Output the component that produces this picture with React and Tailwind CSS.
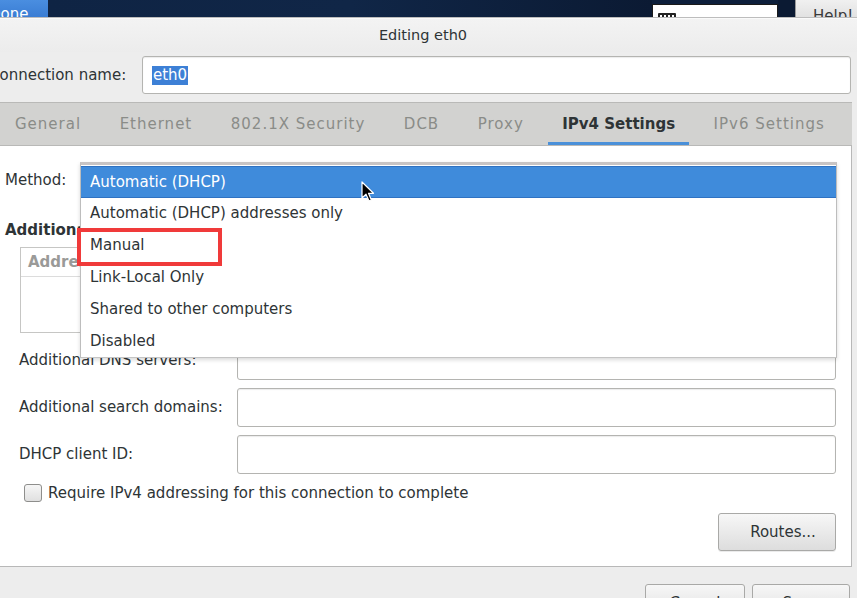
import React from "react";

const FONT = { fontFamily: '"DejaVu Sans", "Noto Sans", sans-serif' };

function TextInput({ className = "", children }) {
  return (
    <div
      className={
        "flex items-center rounded-[3px] border border-[#b4b4b1] bg-white shadow-[inset_0_1px_1px_rgba(0,0,0,0.08)] " +
        className
      }
    >
      {children}
    </div>
  );
}

function Cursor() {
  return (
    <svg width="14" height="22" viewBox="0 0 14 22" className="absolute left-[361px] top-[181px]">
      <path
        d="M1 1 L1 17 L5 13.2 L8 20 L10.4 19 L7.5 12.3 L12.5 12.3 Z"
        fill="#000"
        stroke="#fff"
        strokeWidth="1.2"
        strokeLinejoin="round"
      />
    </svg>
  );
}

export default function App() {
  const tabs = [
    "General",
    "Ethernet",
    "802.1X Security",
    "DCB",
    "Proxy",
    "IPv4 Settings",
    "IPv6 Settings",
  ];
  const items = [
    "Automatic (DHCP)",
    "Automatic (DHCP) addresses only",
    "Manual",
    "Link-Local Only",
    "Shared to other computers",
    "Disabled",
  ];

  return (
    <div
      className="relative h-[598px] w-[857px] overflow-hidden bg-[#0d1f3b] text-[#2e3436]"
      style={FONT}
    >
      {/* top desktop strip */}
      <div className="flex h-[17px] w-full">
        <div className="h-[17px] w-[48px] overflow-hidden bg-gradient-to-b from-[#4a8ee0] to-[#3a7dd4] pt-[5px]">
          <div className="-ml-[11px] text-[15px] leading-[18px] text-white">Done</div>
        </div>
        <div className="flex-1 bg-gradient-to-r from-[#0f2444] via-[#102647] to-[#0b1a33]" />
        <div className="mt-[4px] h-[13px] w-[126px] overflow-hidden border-l border-t border-r border-[#1a1a1a] bg-white pl-[5px] pt-[8px]">
          <div className="h-[8px] w-[18px] rounded-[1px] bg-[#222] pl-[2px] pt-[2px]">
            <div className="h-[2px] w-[14px] bg-[repeating-linear-gradient(90deg,#fff_0_2px,#222_2px_4px)]" />
          </div>
        </div>
        <div className="w-[17px] bg-[#0b1a33]" />
        <div className="h-[17px] w-[62px] overflow-hidden border-l border-[#9a9a9a] bg-gradient-to-b from-[#f0f0f0] to-[#e2e2e2] pl-[17px] pt-[7px]">
          <div className="text-[15px] leading-[18px] text-[#3a3a3a]">Help!</div>
        </div>
      </div>

      {/* dialog */}
      <div className="flex h-[581px] flex-col border-t border-[#bdbdbd] bg-[#ededed]">
        <div className="flex h-[34px] shrink-0 items-center justify-center border-t border-[#fafafa] bg-gradient-to-b from-[#f3f3f3] to-[#ececec] pr-[11px] text-[14.5px]">
          Editing eth0
        </div>

        <div className="mt-[4px] flex shrink-0 items-center">
          <div className="-ml-[11px] w-[153px] whitespace-nowrap text-[15px]">Connection name:</div>
          <TextInput className="mr-[6px] h-[38px] flex-1 pl-[9px]">
            <span className="bg-[#3d80d6] px-[1px] text-[15px] leading-[19px] text-white">eth0</span>
          </TextInput>
        </div>

        {/* tabs */}
        <div className="mr-[5px] mt-[8px] flex h-[44px] shrink-0 gap-[10.5px] border-b border-t border-[#b9b9b7] bg-[#d2d2d0] pl-[1px]">
          {tabs.map((t) =>
            t === "IPv4 Settings" ? (
              <div
                key={t}
                className="flex items-center border-b-[3px] border-[#4a90d9] px-[14px] pt-[3px] text-[15px] font-bold text-[#2e3436]"
              >
                {t}
              </div>
            ) : (
              <div
                key={t}
                className="flex items-center whitespace-nowrap px-[14px] text-[15px] tracking-[1px] text-[#8a8c88]"
              >
                {t}
              </div>
            )
          )}
        </div>

        {/* content */}
        <div className="mr-[5px] flex h-[421px] shrink-0 flex-col border-b border-r border-[#b8b8b8] bg-white pt-[16px] text-[15px]">
          <div className="flex h-[36px] shrink-0 items-center pr-[15px]">
            <div className="w-[80px] pl-[5px]">Method:</div>
            <div className="h-full flex-1 rounded-[3px] border border-[#b4b4b1] bg-[#f2f2f2]" />
          </div>

          <div className="mt-[23px] pl-[5px] text-[15px] font-bold leading-[18px]">Additional static addresses</div>

          <div className="ml-[20px] mr-[15px] mt-[8px] h-[86px] shrink-0 border border-[#c6c6c4] bg-white">
            <div className="flex h-[29px] items-center border-b border-[#dcdcdc] pl-[7px] font-bold text-[#9a9a98]">
              <span className="w-[230px]">Address</span>
              <span className="w-[230px]">Netmask</span>
              <span>Gateway</span>
            </div>
          </div>

          {["Additional DNS servers:", "Additional search domains:", "DHCP client ID:"].map((l) => (
            <div key={l} className="mt-[8px] flex shrink-0 items-center pl-[19px] pr-[15px]">
              <div className="w-[218px] whitespace-nowrap">{l}</div>
              <TextInput className="h-[39px] flex-1" />
            </div>
          ))}

          <div className="mt-[10px] flex h-[18px] shrink-0 items-center pl-[24px]">
            <div className="h-[18px] w-[18px] rounded-[3px] border border-[#8e8e8c] bg-gradient-to-b from-[#f6f6f6] to-[#e0e0e0]" />
            <div className="ml-[6px] whitespace-nowrap">Require IPv4 addressing for this connection to complete</div>
          </div>

          <div className="mt-[11px] flex shrink-0 justify-end pr-[15px]">
            <div className="flex h-[38px] w-[118px] items-center justify-center rounded-[3px] border border-[#a9a9a7] bg-gradient-to-b from-[#f7f7f7] to-[#dddddd] pl-[12px] shadow-[0_1px_0_rgba(0,0,0,0.08)]">
              Routes...
            </div>
          </div>
        </div>

        {/* bottom buttons */}
        <div className="mt-[17px] flex shrink-0 justify-end gap-[7px] pr-[7px] text-[15px]">
          <div className="flex h-[38px] w-[100px] items-center justify-center rounded-[3px] border border-[#a9a9a7] bg-gradient-to-b from-[#f7f7f7] to-[#dddddd]">
            Cancel
          </div>
          <div className="flex h-[38px] w-[98px] items-center justify-center rounded-[3px] border border-[#a9a9a7] bg-gradient-to-b from-[#f7f7f7] to-[#dddddd]">
            Save
          </div>
        </div>
      </div>

      {/* dropdown popup */}
      <div className="absolute left-[80px] top-[162px] w-[757px] border-x border-b border-t-[3px] border-x-[#bdbdbd] border-b-[#c4c4c4] border-t-[#c8c4c4] bg-white pt-[1px] text-[15px] shadow-[0_2px_4px_rgba(0,0,0,0.15)]">
        {items.map((it, i) => (
          <div
            key={it}
            className={
              "flex h-[31.8px] items-center pl-[9px] " +
              (i === 0
                ? "border-y border-[#2f72c2] bg-[#3f8bdb] text-white"
                : "text-[#2e3436]")
            }
          >
            {it}
          </div>
        ))}
      </div>

      {/* red highlight box */}
      <div className="absolute left-[77px] top-[228px] h-[38px] w-[145px] border-[4px] border-[#f03a3a]" />

      <Cursor />
    </div>
  );
}
